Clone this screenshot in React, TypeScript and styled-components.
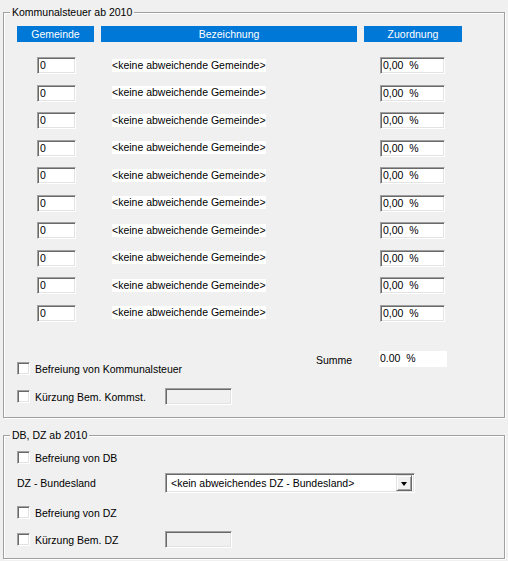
import React from "react";
import styled, { createGlobalStyle } from "styled-components";

const Global = createGlobalStyle`
  html, body { margin: 0; padding: 0; background: #f0f0f0; }
  body {
    font-family: "Liberation Sans", Arial, sans-serif;
    font-size: 10.5px;
    color: #000;
  }
`;

const Page = styled.div`
  width: 508px;
  height: 561px;
  box-sizing: border-box;
  padding: 12px 3px 0 3px;
  display: flex;
  flex-direction: column;
  gap: 17px;
`;

const GroupBox = styled.div<{ $h: number }>`
  position: relative;
  box-sizing: border-box;
  height: ${(p) => p.$h}px;
  border: 1px solid #a0a0a0;
  box-shadow: inset 1px 1px 0 #fff, 1px 1px 0 #fff;
  display: flex;
  flex-direction: column;
  padding-left: 13px;
`;

const GroupTitle = styled.span`
  position: absolute;
  top: -7px;
  left: 6px;
  padding: 0 2px;
  background: #f0f0f0;
  line-height: 13px;
`;

const HeaderGrid = styled.div`
  margin-top: 13px;
  display: grid;
  grid-template-columns: 77px 256px 98px;
  column-gap: 7px;
`;

const HeaderCell = styled.div`
  height: 16px;
  line-height: 16px;
  background: #0078d7;
  color: #fff;
  text-align: center;
`;

const Rows = styled.div`
  margin-top: 15px;
  display: grid;
  grid-template-columns: 77px 256px 98px;
  column-gap: 7px;
  row-gap: 10.5px;
  grid-auto-rows: 17px;
  align-items: center;
`;

const sunken = `
  box-sizing: border-box;
  border: 1px solid;
  border-color: #a0a0a0 #fff #fff #a0a0a0;
  box-shadow: inset 1px 1px 0 #696969, inset -1px -1px 0 #e3e3e3;
`;

const TextBox = styled.div<{ $w: number; $ml: number; $disabled?: boolean }>`
  ${sunken}
  width: ${(p) => p.$w}px;
  height: 17px;
  margin-left: ${(p) => p.$ml}px;
  background: ${(p) => (p.$disabled ? "#f0f0f0" : "#fff")};
  padding-left: 2px;
  line-height: 15px;
  white-space: pre;
`;

const NameLabel = styled.div`
  justify-self: start;
  margin-left: 11px;
  background: #fff;
  height: 13px;
  line-height: 13px;
  margin-top: -1px;
`;

const Bottom = styled.div`
  margin-top: 29.5px;
  display: grid;
  grid-template-columns: 299px auto;
`;

const CheckColumn = styled.div<{ $pt: number; $gap: number }>`
  padding-top: ${(p) => p.$pt}px;
  display: flex;
  flex-direction: column;
  gap: ${(p) => p.$gap}px;
`;

const Row = styled.div<{ $mt?: number; $h?: number }>`
  display: flex;
  align-items: center;
  height: ${(p) => p.$h ?? 17}px;
  margin-top: ${(p) => p.$mt ?? 0}px;
`;

const Check = styled.span`
  ${sunken}
  width: 13px;
  height: 13px;
  background: #fff;
  flex: none;
`;

const CheckText = styled.span<{ $w?: number }>`
  margin-left: 5px;
  ${(p) => (p.$w ? `width: ${p.$w}px;` : "")}
  flex: none;
`;

const PlainLabel = styled.span`
  width: 148px;
  flex: none;
`;

const SummeRow = styled.div`
  display: flex;
  align-items: flex-start;
`;

const SummeLabel = styled.span`
  width: 63px;
  margin-top: 3px;
  line-height: 13px;
`;

const SummeValue = styled.div`
  width: 68px;
  height: 16px;
  background: #fff;
  line-height: 14px;
  padding-left: 1px;
  box-sizing: border-box;
  white-space: pre;
`;

const Combo = styled.div`
  ${sunken}
  width: 250px;
  height: 20px;
  background: #fff;
  display: flex;
  align-items: center;
  padding: 2px 2px 2px 5px;
`;

const ComboText = styled.span`
  flex: 1;
`;

const ComboButton = styled.span`
  box-sizing: border-box;
  width: 16px;
  height: 16px;
  background: #f0f0f0;
  border: 1px solid;
  border-color: #e3e3e3 #696969 #696969 #e3e3e3;
  box-shadow: inset 1px 1px 0 #fff, inset -1px -1px 0 #a0a0a0;
  display: flex;
  align-items: center;
  justify-content: center;
`;

const Arrow = styled.span`
  width: 0;
  height: 0;
  border-left: 3.5px solid transparent;
  border-right: 3.5px solid transparent;
  border-top: 4px solid #000;
  margin-top: 1px;
`;

const rows = Array.from({ length: 10 });

export default function App() {
  return (
    <>
      <Global />
      <Page>
        <GroupBox $h={406}>
          <GroupTitle>Kommunalsteuer ab 2010</GroupTitle>
          <HeaderGrid>
            <HeaderCell>Gemeinde</HeaderCell>
            <HeaderCell>Bezeichnung</HeaderCell>
            <HeaderCell>Zuordnung</HeaderCell>
          </HeaderGrid>
          <Rows>
            {rows.map((_, i) => (
              <React.Fragment key={i}>
                <TextBox $w={39} $ml={20}>0</TextBox>
                <NameLabel>&lt;keine abweichende Gemeinde&gt;</NameLabel>
                <TextBox $w={65} $ml={16}>{"0,00  %"}</TextBox>
              </React.Fragment>
            ))}
          </Rows>
          <Bottom>
            <CheckColumn $pt={9} $gap={11}>
              <Row>
                <Check />
                <CheckText>Befreiung von Kommunalsteuer</CheckText>
              </Row>
              <Row>
                <Check />
                <CheckText $w={130}>Kürzung Bem. Kommst.</CheckText>
                <TextBox $w={67} $ml={0} $disabled />
              </Row>
            </CheckColumn>
            <SummeRow>
              <SummeLabel>Summe</SummeLabel>
              <SummeValue>{"0.00  %"}</SummeValue>
            </SummeRow>
          </Bottom>
        </GroupBox>
        <GroupBox $h={124}>
          <GroupTitle>DB, DZ ab 2010</GroupTitle>
          <Row $mt={13}>
            <Check />
            <CheckText>Befreiung von DB</CheckText>
          </Row>
          <Row $mt={7} $h={20}>
            <PlainLabel>DZ - Bundesland</PlainLabel>
            <Combo>
              <ComboText>&lt;kein abweichendes DZ - Bundesland&gt;</ComboText>
              <ComboButton>
                <Arrow />
              </ComboButton>
            </Combo>
          </Row>
          <Row $mt={11}>
            <Check />
            <CheckText>Befreiung von DZ</CheckText>
          </Row>
          <Row $mt={10}>
            <Check />
            <CheckText $w={130}>Kürzung Bem. DZ</CheckText>
            <TextBox $w={67} $ml={0} $disabled />
          </Row>
        </GroupBox>
      </Page>
    </>
  );
}
